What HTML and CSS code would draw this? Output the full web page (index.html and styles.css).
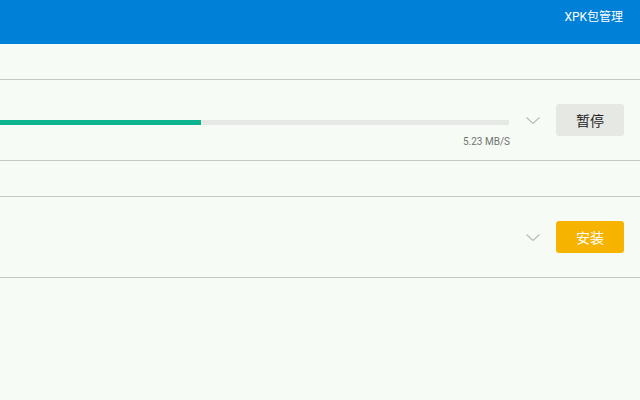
FILE: index.html
```html
<!DOCTYPE html>
<html lang="zh-CN">
<head>
    <meta charset="UTF-8">
    <meta name="viewport" content="width=device-width, initial-scale=1.0">
    <title>XPK包管理</title>
    <link rel="stylesheet" href="styles.css">
</head>
<body>

    <div class="header">
        <span class="title">XPK包管理</span>
    </div>

    <div class="list">
        <div class="group"></div>

        <div class="task">
            <div class="progress">
                <div class="track"><div class="fill" style="width: 39.5%"></div></div>
                <div class="speed">5.23 MB/S</div>
            </div>
            <svg class="chevron" width="14" height="7" viewBox="0 0 14 7">
                <polyline points="0.5,0.5 7,6.5 13.5,0.5" />
            </svg>
            <button class="btn pause">暂停</button>
        </div>

        <div class="group"></div>

        <div class="task">
            <div class="progress"></div>
            <svg class="chevron" width="14" height="7" viewBox="0 0 14 7">
                <polyline points="0.5,0.5 7,6.5 13.5,0.5" />
            </svg>
            <button class="btn install">安装</button>
        </div>
    </div>

</body>
</html>
```

FILE: styles.css
```css
body {
    margin: 0;
    background-color: #f7fbf6;
    font-family: Roboto, "Noto Sans CJK SC", sans-serif;
}
.header {
    height: 44px;
    background-color: #0080d6;
    display: flex;
    justify-content: flex-end;
    align-items: flex-start;
    padding: 9px 17px 0 0;
    box-sizing: border-box;
}
.title {
    color: #fff;
    font-size: 12px;
    line-height: 16px;
}
.group {
    height: 35px;
    border-bottom: 1px solid #c6c8c5;
}
.task {
    height: 80px;
    border-bottom: 1px solid #c6c8c5;
    display: flex;
    align-items: center;
    padding-right: 16px;
}
.progress {
    flex: 1;
    height: 80px;
    position: relative;
    margin-right: 15px;
}
.track {
    position: absolute;
    left: 0;
    right: 2px;
    top: 40px;
    height: 5px;
    background-color: #e6e8e5;
}
.fill {
    height: 100%;
    background-color: #0db38e;
}
.speed {
    position: absolute;
    right: 1px;
    top: 54px;
    font-size: 10px;
    line-height: 16px;
    color: #707370;
}
.chevron {
    fill: none;
    stroke: #b8bab8;
    stroke-width: 1.1;
    margin-right: 16px;
}
.btn {
    width: 68px;
    height: 32px;
    border: none;
    border-radius: 3px;
    font-family: inherit;
    font-size: 14px;
    padding: 0;
    cursor: pointer;
}
.pause {
    background-color: #e6e8e4;
    color: #222;
}
.install {
    background-color: #f6b400;
    color: #fff;
}
```
